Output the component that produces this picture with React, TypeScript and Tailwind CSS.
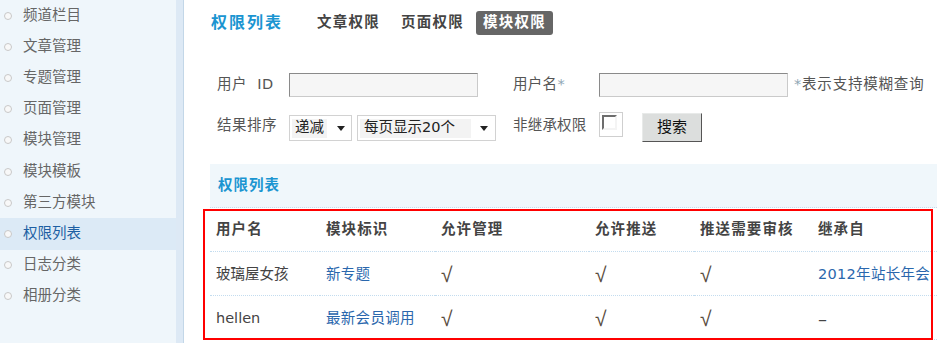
import * as React from "react";

const menu = [
  "频道栏目",
  "文章管理",
  "专题管理",
  "页面管理",
  "模块管理",
  "模块模板",
  "第三方模块",
  "权限列表",
  "日志分类",
  "相册分类",
];

const cols = ["w-[110px]", "w-[115px]", "w-[154px]", "w-[105px]", "w-[118px]", "flex-1"];

const rows = [
  { user: "玻璃屋女孩", mod: "新专题", from: "2012年站长年会" },
  { user: "hellen", mod: "最新会员调用", from: "–" },
];

function Arrow() {
  return (
    <svg width="8" height="5" viewBox="0 0 8 5" className="shrink-0">
      <path d="M0 0h8L4 5z" fill="#222" />
    </svg>
  );
}

function Check() {
  return (
    <span
      className="text-[21px] leading-none text-[#5a4c40]"
      style={{ fontFamily: '"Liberation Sans", Arial, sans-serif' }}
    >
      √
    </span>
  );
}

function Sidebar() {
  return (
    <div className="flex h-full shrink-0">
      <ul className="w-[176px] bg-[#eff6fb]">
        {menu.map((m) => {
          const active = m === "权限列表";
          return (
            <li
              key={m}
              className={
                "flex h-[31.2px] items-center pl-[4px] " +
                (active ? "bg-[#dceaf6] text-[#1d5fa3]" : "text-[#666]")
              }
            >
              <span className="h-[8px] w-[8px] rounded-full border border-[#c8c8c8] bg-[#f8f8f8]" />
              <span className="ml-[11px]">{m}</span>
            </li>
          );
        })}
      </ul>
      <div className="w-[7px] bg-[#dde9f5]" />
      <div className="w-[1px] bg-[#c3d7e8]" />
    </div>
  );
}

export default function App() {
  return (
    <div
      className="relative flex h-[343px] w-[937px] overflow-hidden bg-white text-[14.5px] text-[#555]"
      style={{ fontFamily: '"DejaVu Sans", "Noto Sans CJK SC", sans-serif' }}
    >
      <Sidebar />

      <div className="flex flex-1 flex-col pl-[26px]">
        {/* title + tabs */}
        <div className="flex h-[45px] items-center pt-[1px]">
          <span className="ml-[1px] text-[16px] font-bold tracking-[2px] text-[#1b95d1]">权限列表</span>
          <span className="ml-[34px] font-bold tracking-[1.25px] text-[#444]">文章权限</span>
          <span className="ml-[21px] font-bold tracking-[1.25px] text-[#444]">页面权限</span>
          <span className="ml-[12px] flex h-[24px] items-center rounded-[3px] bg-[#666] px-[7px] font-bold tracking-[1.25px] text-white">
            模块权限
          </span>
        </div>

        {/* search form */}
        <div className="ml-[7px] mt-[28px] flex h-[24px] items-center">
          <span className="w-[72px] tracking-[0.5px]">用户&nbsp;&nbsp;ID</span>
          <div className="h-[24px] w-[189px] border border-[#cacaca] border-l-[#8a8a8a] border-t-[#8a8a8a] bg-[#f6f6f6]" />
          <span className="ml-[35px] w-[86px] tracking-[0.3px]">
            用户名<span className="text-[#8fa6b5]">*</span>
          </span>
          <div className="h-[24px] w-[189px] border border-[#cacaca] border-l-[#8a8a8a] border-t-[#8a8a8a] bg-[#f6f6f6]" />
          <span className="ml-[6px] tracking-[0.8px]">
            <span className="text-[#8fa6b5]">*</span>表示支持模糊查询
          </span>
        </div>

        <div className="ml-[7px] mt-[15px] flex h-[30px] items-start">
          <span className="mt-[3px] w-[72px] tracking-[0.5px]">结果排序</span>
          <div className="mt-[3px] flex h-[26px] w-[63px] items-center border border-[#d2d2d2] bg-white pl-[2px] pr-[6px]">
            <span className="flex h-[19px] w-[35px] items-center bg-[#f3f3f3] pl-[3px] text-[#222]">递减</span>
            <span className="flex-1" />
            <Arrow />
          </div>
          <div className="ml-[5px] mt-[3px] flex h-[26px] w-[139px] items-center border border-[#d2d2d2] bg-white pl-[2px] pr-[7px]">
            <span className="flex h-[19px] w-[111px] items-center bg-[#f3f3f3] pl-[4px] text-[#222]">每页显示20个</span>
            <span className="flex-1" />
            <Arrow />
          </div>
          <span className="ml-[17px] mt-[3px] w-[86px] tracking-[0.2px]">非继承权限</span>
          <div className="flex h-[25px] w-[24px] items-center justify-center border border-[#cfcfcf] bg-white">
            <div className="-ml-[3px] -mt-[5px] h-[15px] w-[15px] border-2 border-[#f4f4f4] border-l-[#6d6d6d] border-t-[#6d6d6d] bg-white" />
          </div>
          <button className="ml-[19px] mt-[1px] h-[29px] w-[60px] border border-[#e8eae9] border-b-[#555] border-r-[#555] bg-[#dcdedd] text-[15px] text-[#111]">
            搜索
          </button>
        </div>

        {/* list section */}
        <div className="mt-[22px] flex h-[44px] items-center border-b border-dotted border-[#c3dcef] bg-[#f0f7fb] pl-[8px]">
          <span className="font-bold tracking-[1px] text-[#1b95d1]">权限列表</span>
        </div>

        <div className="mt-[1px]">
          <div className="flex h-[43px] font-bold tracking-[1.1px] text-[#444]">
            {["用户名", "模块标识", "允许管理", "允许推送", "推送需要审核", "继承自"].map((h, i) => (
              <div key={h} className={cols[i] + " flex items-center border-b border-dotted border-[#c3dcef] pl-[6px]"}>
                {h}
              </div>
            ))}
          </div>
          {rows.map((r) => (
            <div key={r.user} className="flex h-[44px] pt-[2px] text-[#444]">
              <div className={cols[0] + " flex items-center border-b border-dotted border-[#c3dcef] pl-[6px]"}>{r.user}</div>
              <div className={cols[1] + " flex items-center border-b border-dotted border-[#c3dcef] pl-[6px] tracking-[0.3px] text-[#2a67ad]"}>{r.mod}</div>
              <div className={cols[2] + " flex items-center border-b border-dotted border-[#c3dcef] pl-[6px]"}>
                <Check />
              </div>
              <div className={cols[3] + " flex items-center border-b border-dotted border-[#c3dcef] pl-[6px]"}>
                <Check />
              </div>
              <div className={cols[4] + " flex items-center border-b border-dotted border-[#c3dcef] pl-[6px]"}>
                <Check />
              </div>
              <div
                className={
                  cols[5] +
                  " flex items-center whitespace-nowrap border-b border-dotted border-[#c3dcef] pl-[6px] tracking-[0.3px] " +
                  (r.from === "–" ? "text-[18px] text-[#444]" : "text-[#2a67ad]")
                }
              >
                {r.from}
              </div>
            </div>
          ))}
        </div>
      </div>

      {/* red annotation box */}
      <div className="pointer-events-none absolute left-[203px] top-[209px] h-[131px] w-[730px] border-2 border-[#f00]" />
    </div>
  );
}
